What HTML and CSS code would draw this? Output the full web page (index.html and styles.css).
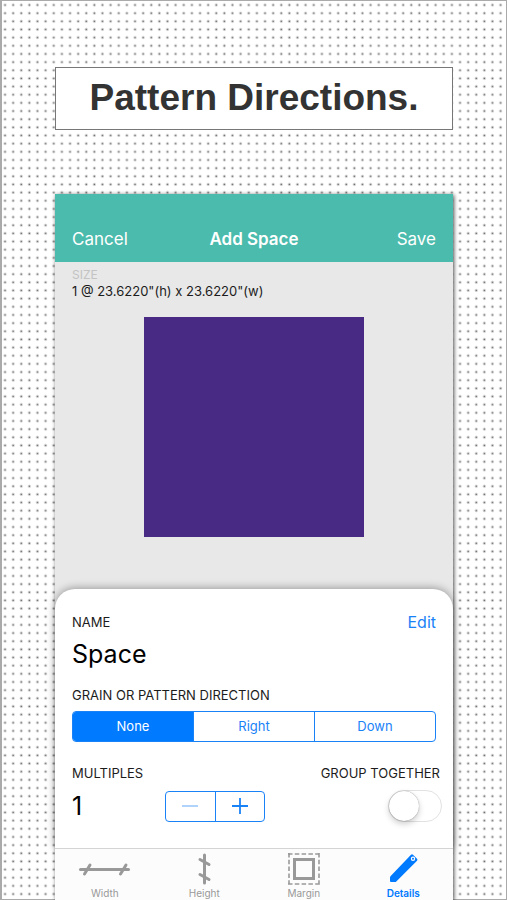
FILE: index.html
```html
<!DOCTYPE html>
<html lang="en">
<head>
<meta charset="utf-8">
<meta name="viewport" content="width=device-width, initial-scale=1">
<title>Pattern Directions</title>
<link rel="stylesheet" href="styles.css">
</head>
<body>
<main class="poster">
  <h1 class="headline">Pattern Directions.</h1>
  <section class="phone">
    <header class="navbar">
      <button class="nav-button" type="button">Cancel</button>
      <h2 class="nav-title">Add Space</h2>
      <button class="nav-button nav-save" type="button">Save</button>
    </header>
    <div class="preview">
      <p class="size-label">SIZE</p>
      <p class="size-value">1 @ 23.6220"(h) x 23.6220"(w)</p>
      <div class="swatch"></div>
    </div>
    <form class="sheet">
      <div class="row">
        <span class="label">NAME</span>
        <button class="edit" type="button">Edit</button>
      </div>
      <p class="name">Space</p>
      <fieldset class="direction">
        <legend class="label">GRAIN OR PATTERN DIRECTION</legend>
        <div class="segments">
          <label class="segment"><input type="radio" name="direction" checked><span>None</span></label>
          <label class="segment"><input type="radio" name="direction"><span>Right</span></label>
          <label class="segment"><input type="radio" name="direction"><span>Down</span></label>
        </div>
      </fieldset>
      <div class="row row-labels">
        <span class="label">MULTIPLES</span>
        <label class="label" for="group">GROUP TOGETHER</label>
      </div>
      <div class="row row-controls">
        <output class="count">1</output>
        <div class="stepper">
          <button type="button" aria-label="Decrease" disabled>
            <svg width="18" height="18" viewBox="0 0 18 18"><path d="M1 9h16" stroke="currentColor" stroke-width="1.200"/></svg>
          </button>
          <button type="button" aria-label="Increase">
            <svg width="18" height="18" viewBox="0 0 18 18"><path d="M1 9h16M9 1v16" stroke="currentColor" stroke-width="1.800"/></svg>
          </button>
        </div>
        <input class="switch" id="group" type="checkbox">
      </div>
    </form>
    <nav class="tabs">
      <a class="tab" href="#width">
        <svg width="54" height="34" viewBox="0 0 54 34" fill="none" stroke="currentColor" stroke-linecap="round"><path d="M2.500 17.500h48" stroke-width="3"/><path d="M6.500 22l5.500-9M42.500 22l5.500-9" stroke-width="3"/></svg>
        <span>Width</span>
      </a>
      <a class="tab" href="#height">
        <svg width="34" height="34" viewBox="0 0 34 34" fill="none" stroke="currentColor" stroke-linecap="round"><path d="M17.500 3v28" stroke-width="3"/><path d="M13 7.500l9 5M13 22.500l9 5" stroke-width="3"/></svg>
        <span>Height</span>
      </a>
      <a class="tab" href="#margin">
        <svg width="34" height="34" viewBox="0 0 34 34" fill="none" stroke="currentColor"><path d="M1 2h32M1 32h32M2 1v32M32 1v32" stroke-width="1.600" stroke-dasharray="4.500 2.300"/><rect x="7.500" y="7.500" width="19" height="19" stroke-width="3"/></svg>
        <span>Margin</span>
      </a>
      <a class="tab tab-active" href="#details" aria-current="page">
        <svg width="34" height="34" viewBox="0 0 34 34"><path d="M4.700 24L25 2.800q1-1 2 0l4 4q1 1 0 2L10.300 29.400q-.5.500-1.200.5H5q-1 0-1-1v-3.300q0-1 .7-1.600z" fill="currentColor"/><circle cx="27" cy="6.800" r="1.600" fill="none" stroke="#fcfcfc" stroke-width="1.200"/></svg>
        <span>Details</span>
      </a>
    </nav>
  </section>
</main>
</body>
</html>
```
FILE: styles.css
```css
* {
  box-sizing: border-box;
}

body {
  margin: 0;
  background: #fff;
  color: #1c1c1c;
  font-family: Inter, "Liberation Sans", sans-serif;
}

h1,
h2,
p {
  margin: 0;
}

button {
  padding: 0;
  border: 0;
  background: none;
  color: inherit;
  font: inherit;
  cursor: pointer;
}

.poster {
  display: flex;
  flex-direction: column;
  gap: 64px;
  min-height: 100vh;
  padding: 66px 53px 0;
  border: 1px solid #aaa;
  border-width: 1px 1px 1px 2px;
  background-image: radial-gradient(circle at 3px 4px, #555 0, rgba(100, 100, 100, 0.35) 1px, transparent 2px);
  background-size: calc(100% / 62) calc(100% / 110);
}

.headline {
  padding: 8px 0 9px;
  border: 1px solid #777;
  background: #fff;
  color: #333;
  font: bold 37px/44px "Liberation Sans", Arial, sans-serif;
  text-align: center;
}

.phone {
  display: flex;
  flex: 1;
  flex-direction: column;
  margin: 0 0 -1px;
  background: #e8e8e8;
  box-shadow: 1px 1px 4px rgba(0, 0, 0, 0.7);
}

.navbar {
  display: grid;
  grid-template-columns: 1fr auto 1fr;
  align-items: center;
  padding: 33px 17px 11px;
  background: #4abbac;
  color: #fff;
  font-size: 17px;
  line-height: 24px;
}

.nav-button {
  justify-self: start;
}

.nav-save {
  justify-self: end;
}

.nav-title {
  font-size: 17px;
  font-weight: 600;
}

.preview {
  flex: 1;
  padding: 5px 17px 16px;
}

.size-label {
  color: #c3c3c3;
  font-size: 12px;
  line-height: 16px;
}

.size-value {
  font-size: 13px;
  line-height: 16px;
}

.swatch {
  width: 220px;
  margin: 18px auto 0;
  aspect-ratio: 1;
  background: #482a85;
}

.sheet {
  padding: 21px 17px 26px;
  border-radius: 20px 20px 0 0;
  background: #fff;
  box-shadow: 0 -1px 8px rgba(0, 0, 0, 0.35);
}

.row {
  display: flex;
  align-items: center;
  justify-content: space-between;
}

.label {
  font-size: 13px;
  line-height: 16px;
}

.edit {
  color: #1a82f7;
  font-size: 16px;
  line-height: 24px;
}

.name {
  margin: 4px 0 17px;
  color: #000;
  font-size: 25px;
  line-height: 32px;
}

.direction {
  margin: 0;
  padding: 0;
  border: 0;
}

.direction .label {
  padding: 0;
}

.segments {
  display: flex;
  margin-top: 8px;
  border: 1px solid #1a82f7;
  border-radius: 4px;
  overflow: hidden;
}

.segment {
  flex: 1;
  color: #1a82f7;
  font-size: 13px;
  line-height: 29px;
  text-align: center;
}

.segment + .segment {
  border-left: 1px solid #1a82f7;
}

.segment input {
  position: absolute;
  opacity: 0;
}

.segment span {
  display: block;
}

.segment input:checked + span {
  background: #007aff;
  color: #fff;
}

.row-labels {
  margin: 23px -4px 0 0;
}

.row-controls {
  margin: 9px -6px 0 0;
}

.count {
  width: 93px;
  color: #000;
  font-size: 25px;
  line-height: 32px;
}

.stepper {
  display: flex;
  width: 100px;
  margin-right: auto;
  border: 1px solid #1a82f7;
  border-radius: 4px;
}

.stepper button {
  display: flex;
  flex: 1;
  align-items: center;
  justify-content: center;
  height: 29px;
  color: #1a82f7;
}

.stepper button + button {
  border-left: 1px solid #1a82f7;
}

.stepper button:disabled {
  color: #7ab5f8;
}

.switch {
  display: flex;
  width: 54px;
  height: 32px;
  margin: 0;
  border: 1px solid #e2e2e2;
  border-radius: 16px;
  background: #fff;
  appearance: none;
}

.switch::before {
  width: 30px;
  height: 30px;
  border-radius: 50%;
  background: #fff;
  box-shadow: 0 0 1px rgba(0, 0, 0, 0.5), 0 3px 6px rgba(0, 0, 0, 0.2);
  content: "";
}

.switch:checked {
  justify-content: flex-end;
  background: #4cd964;
}

.tabs {
  display: grid;
  grid-template-columns: repeat(4, 1fr);
  padding-top: 3px;
  border-top: 1px solid #d4d4d4;
  background: #fcfcfc;
}

.tab {
  display: flex;
  flex-direction: column;
  align-items: center;
  color: #999;
  font-size: 10px;
  line-height: 14px;
  text-decoration: none;
}

.tab-active {
  color: #007aff;
  font-weight: 600;
}
```
